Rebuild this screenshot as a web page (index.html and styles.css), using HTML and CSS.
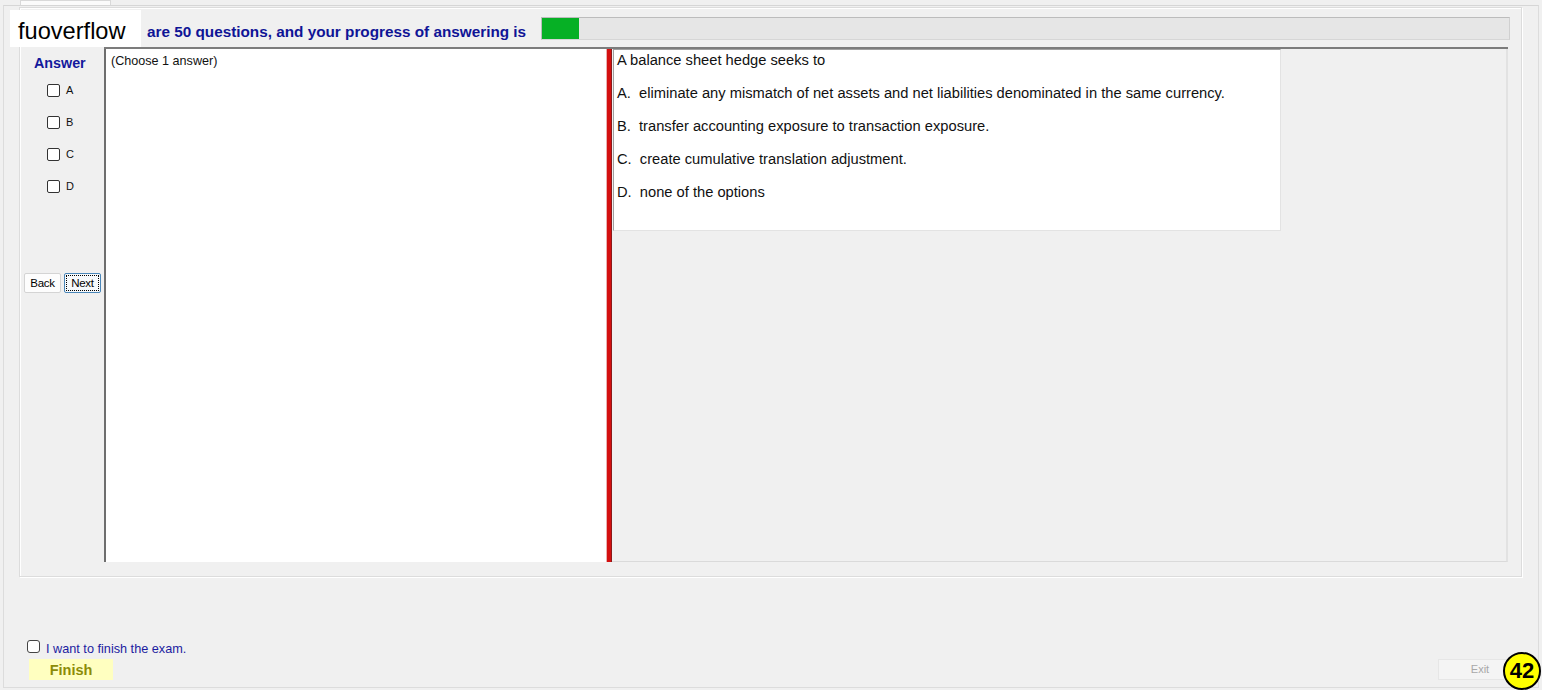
FILE: index.html
```html
<!DOCTYPE html>
<html>
<head>
<meta charset="utf-8">
<link rel="stylesheet" href="styles.css">
</head>
<body>
<div class="screen">
  <div class="tab"></div>
  <div class="outer">
    <div class="group">
      <div class="header">
        <div class="header-text">are 50 questions, and your progress of answering is</div>
        <div class="progress"><div class="progress-fill" style="width:37px"></div></div>
      </div>
      <div class="content">
        <div class="answer-col">
          <div class="answer-title">Answer</div>
          <div class="opts">
            <div class="opt"><span class="cb"></span><span class="opt-label">A</span></div>
            <div class="opt"><span class="cb"></span><span class="opt-label">B</span></div>
            <div class="opt"><span class="cb"></span><span class="opt-label">C</span></div>
            <div class="opt"><span class="cb"></span><span class="opt-label">D</span></div>
          </div>
          <div class="nav">
            <div class="btn">Back</div>
            <div class="btn btn-focus"><span class="focus-ring">Next</span></div>
          </div>
        </div>
        <div class="main">
          <div class="textarea">(Choose 1 answer)</div>
          <div class="splitter"></div>
          <div class="right-panel">
            <div class="qbox">
              <p class="qline">A balance sheet hedge seeks to</p>
              <p class="qline">A.&nbsp; eliminate any mismatch of net assets and net liabilities denominated in the same currency.</p>
              <p class="qline">B.&nbsp; transfer accounting exposure to transaction exposure.</p>
              <p class="qline">C.&nbsp; create cumulative translation adjustment.</p>
              <p class="qline">D.&nbsp; none of the options</p>
            </div>
          </div>
        </div>
      </div>
    </div>
    <div class="bottom">
      <div class="finish-check"><span class="cb cb-round"></span><span class="finish-label">I want to finish the exam.</span></div>
      <div class="bottom-row">
        <div class="finish-btn">Finish</div>
        <div class="exit-btn">Exit</div>
      </div>
    </div>
  </div>
  <div class="watermark">fuoverflow</div>
  <div class="badge">42</div>
</div>
</body>
</html>
```
FILE: styles.css
```css
* { box-sizing: border-box; }
html, body { margin: 0; padding: 0; }
body {
  background: #f0f0f0;
  font-family: "Liberation Sans", Arial, sans-serif;
  color: #000;
}
.screen {
  position: relative;
  width: 1542px;
  height: 690px;
  overflow: hidden;
}
.tab {
  width: 91px;
  height: 6px;
  margin-left: 20px;
  background: #fbfbfb;
  border: 1px solid #d9d9d9;
  border-bottom: none;
}
.outer {
  margin: -1px 0 0 3px;
  width: 1536px;
  height: 683px;
  border: 1px solid #dcdcdc;
  border-top-color: #d6d6d6;
  display: flex;
  flex-direction: column;
}
.group {
  margin: 1px 0 0 15px;
  width: 1503px;
  height: 570px;
  border: 1px solid #dcdcdc;
  box-shadow: inset 1px 1px 0 #ffffff, 1px 1px 0 #ffffff;
  display: flex;
  flex-direction: column;
}
.header {
  height: 39px;
  display: flex;
  justify-content: space-between;
  align-items: flex-start;
  padding-left: 127px;
  padding-right: 11px;
}
.header-text {
  margin-top: 15px;
  font-weight: bold;
  font-size: 15.3px;
  line-height: 18px;
  color: #0f1496;
  white-space: nowrap;
}
.progress {
  margin-top: 9px;
  width: 969px;
  height: 23px;
  background: #e6e6e6;
  border: 1px solid #bcbcbc;
  border-right-color: #d0d0d0;
  border-bottom-color: #d6d6d6;
}
.progress-fill {
  height: 100%;
  background: #06b025;
}
.content {
  display: flex;
  padding-left: 2px;
  height: 515px;
}
.answer-col {
  width: 82px;
  display: flex;
  flex-direction: column;
}
.answer-title {
  margin: 8px 0 0 12px;
  font-weight: bold;
  font-size: 14.3px;
  line-height: 16px;
  color: #13199c;
}
.opts {
  margin: 13px 0 0 25px;
  display: flex;
  flex-direction: column;
}
.opt {
  height: 32px;
  display: flex;
  align-items: flex-start;
}
.cb {
  display: block;
  width: 13px;
  height: 13px;
  background: #ffffff;
  border: 1px solid #333333;
  border-radius: 2px;
  flex: none;
}
.opt-label {
  margin-left: 6px;
  font-size: 11px;
  line-height: 13px;
  color: #111;
}
.nav {
  margin: 61px 0 0 2px;
  display: flex;
  gap: 3px;
}
.btn {
  width: 37px;
  height: 20px;
  background: #fdfdfd;
  border: 1px solid #d4d4d4;
  border-radius: 2px;
  font-size: 11.5px;
  line-height: 18px;
  text-align: center;
  color: #000;
  letter-spacing: -0.3px;
}
.btn-focus {
  border-color: #4a86b8;
  padding: 1px;
  background: #f6f9fb;
}
.focus-ring {
  display: block;
  height: 16px;
  line-height: 15px;
  border: 1px dotted #000;
}
.main {
  width: 1404px;
  display: flex;
  border-top: 2px solid #7c7c7c;
}
.textarea {
  width: 502px;
  background: #ffffff;
  border-left: 2px solid #6e6e6e;
  padding: 5px 0 0 5px;
  font-size: 12.6px;
  line-height: 15px;
  color: #111;
}
.splitter {
  width: 6px;
  background: #d41010;
  border-left: 1px solid #e9b0b0;
  border-right: 1px solid #8c1a1a;
}
.right-panel {
  flex: 1;
  background: #f0f0f0;
  border-right: 2px solid #e2e2e2;
  border-bottom: 1px solid #dadada;
  padding: 0 0 0 1px;
}
.qbox {
  width: 668px;
  height: 182px;
  background: #ffffff;
  border-left: 1px solid #a0a0a0;
  border-top: 1px solid #a0a0a0;
  border-right: 1px solid #e3e3e3;
  border-bottom: 1px solid #e3e3e3;
  padding-left: 3px;
}
.qline {
  margin: 0 0 13px 0;
  font-size: 14.7px;
  line-height: 20px;
  color: #111;
  white-space: nowrap;
}
.bottom {
  display: flex;
  flex-direction: column;
  padding: 62px 16px 0 23px;
}
.finish-check {
  display: flex;
  align-items: center;
  height: 14px;
}
.cb-round {
  border-color: #444;
  border-radius: 3px;
}
.finish-label {
  margin-left: 6px;
  margin-top: 5px;
  font-size: 12.7px;
  color: #1c1ca0;
}
.bottom-row {
  margin-top: 6px;
  display: flex;
  justify-content: space-between;
}
.finish-btn {
  margin-left: 2px;
  width: 84px;
  height: 21px;
  background: #ffffc0;
  font-weight: bold;
  font-size: 14.5px;
  line-height: 22px;
  color: #8c8c08;
  text-align: center;
}
.exit-btn {
  width: 84px;
  height: 21px;
  background: #f4f4f4;
  border: 1px solid #e6e6e6;
  font-size: 11px;
  line-height: 19px;
  color: #a8a8a8;
  text-align: center;
}
.watermark {
  position: absolute;
  left: 10px;
  top: 10px;
  width: 131px;
  height: 37px;
  background: #ffffff;
  padding-left: 8px;
  font-size: 23.6px;
  line-height: 42px;
  color: #000;
}
.badge {
  position: absolute;
  right: 1px;
  bottom: 0px;
  width: 38px;
  height: 38px;
  border-radius: 50%;
  background: #ffff00;
  border: 2px solid #000;
  font-weight: bold;
  font-size: 22px;
  line-height: 34px;
  text-align: center;
  color: #000;
}
```
